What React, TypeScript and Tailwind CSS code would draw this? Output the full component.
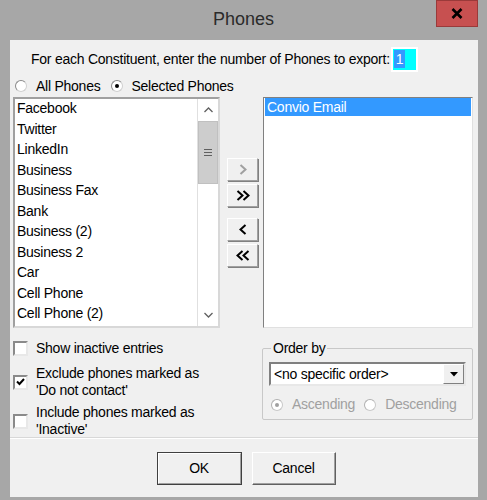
import React from 'react';

const font = "font-['Liberation_Sans',Arial,sans-serif]";

const phones = [
  'Facebook',
  'Twitter',
  'LinkedIn',
  'Business',
  'Business Fax',
  'Bank',
  'Business (2)',
  'Business 2',
  'Car',
  'Cell Phone',
  'Cell Phone (2)',
];

const Radio = ({ checked, disabled }: { checked?: boolean; disabled?: boolean }) => (
  <span
    className={`relative inline-block w-[12px] h-[12px] rounded-full border ${
      disabled ? 'border-[#c8c8c8] border-t-[#b0b0b0] border-l-[#b0b0b0]' : 'border-[#d0d0d0] border-t-[#8a8a8a] border-l-[#8a8a8a]'
    } bg-white`}
  >
    {checked && (
      <span
        className={`absolute left-[3px] top-[3px] w-[4px] h-[4px] rounded-full ${disabled ? 'bg-[#a0a0a0]' : 'bg-black'}`}
      />
    )}
  </span>
);

const Checkbox = ({ checked }: { checked?: boolean }) => (
  <span className="flex items-center justify-center w-[15px] h-[15px] bg-white border-2 border-t-[#8a8a8a] border-l-[#8a8a8a] border-r-[#e8e8e8] border-b-[#e8e8e8] shrink-0">
    {checked && (
      <svg width="9" height="8" viewBox="0 0 9 8">
        <path d="M1 3.5 L3.5 6 L8 1" stroke="black" strokeWidth="2" fill="none" />
      </svg>
    )}
  </span>
);

// chevron drawings for the move buttons
const Chevrons = ({ dir, count, color }: { dir: 'right' | 'left'; count: number; color: string }) => {
  const one = dir === 'right' ? 'M1 1 L6 5.5 L1 10' : 'M6 1 L1 5.5 L6 10';
  return (
    <svg width={count === 1 ? 8 : 14} height="11" viewBox={`0 0 ${count === 1 ? 8 : 14} 11`}>
      <path d={one} stroke={color} strokeWidth="2" fill="none" transform="translate(0.5 0)" />
      {count === 2 && (
        <path d={one} stroke={color} strokeWidth="2" fill="none" transform="translate(6.5 0)" />
      )}
    </svg>
  );
};

const ArrowBtn = ({ dir, count, disabled }: { dir: 'right' | 'left'; count: number; disabled?: boolean }) => (
  <button className="w-[31px] h-[23px] flex items-center justify-center bg-[#f0f0f0] border border-t-white border-l-white border-r-[#a0a0a0] border-b-[#a0a0a0] shadow-[1px_1px_0_#808080]">
    <Chevrons dir={dir} count={count} color={disabled ? '#a0a0a0' : '#000'} />
  </button>
);

const App = () => {
  return (
    <div className={`${font} w-[487px] h-[500px] bg-[#a7a7a7] flex flex-col text-[14px] tracking-[-0.25px] text-black`}>
      {/* title bar */}
      <div className="relative h-[40px] flex items-center justify-center shrink-0">
        <span className="text-[18px] tracking-normal text-[#2b2b2b] -mt-[1px]">Phones</span>
        <div className="absolute left-[436px] top-0 w-[42px] h-[27px] bg-[#c75050] border border-[#9a3a3a] flex items-center justify-center">
          <svg width="12" height="11" viewBox="0 0 12 11">
            <path d="M1.5 1 L10.5 10 M10.5 1 L1.5 10" stroke="black" strokeWidth="2.6" />
          </svg>
        </div>
      </div>

      {/* client */}
      <div className="ml-[10px] w-[468px] h-[457px] bg-[#f0f0f0] flex flex-col">
        <div className="flex items-center h-[34px] pt-[4px]">
          <span className="ml-[21px] whitespace-nowrap">For each Constituent, enter the number of Phones to export:</span>
          <div className="ml-[1px] w-[27px] h-[25px] border-2 border-white bg-[#00ffff] flex items-center pl-[1px]">
            <span className="bg-[#3399ff] text-white px-[2px] leading-[18px]">1</span>
          </div>
        </div>

        <div className="flex items-center h-[24px] ml-[5px]">
          <Radio />
          <span className="ml-[9px]">All Phones</span>
          <span className="ml-[11px] flex items-center">
            <Radio checked />
          </span>
          <span className="ml-[8px]">Selected Phones</span>
        </div>

        <div className="flex mt-[-1px] ml-[3px]">
          {/* left list */}
          <div className="w-[207px] h-[231px] bg-white border-2 border-t-[#a0a0a0] border-l-[#a0a0a0] border-r-[#d8d8d8] border-b-[#d8d8d8] flex">
            <div className="flex-1 pl-[2px] -mt-[1px] leading-[20.5px]">
              {phones.map((p) => (
                <div key={p} className="whitespace-nowrap">
                  {p}
                </div>
              ))}
            </div>
            <div className="w-[21px] bg-[#f0f0f0] border-l border-[#e0e0e0] flex flex-col">
              <div className="h-[22px] bg-white flex items-center justify-center">
                <svg width="9" height="6" viewBox="0 0 9 6">
                  <path d="M0.5 5 L4.5 1 L8.5 5" stroke="#606060" strokeWidth="1.3" fill="none" />
                </svg>
              </div>
              <div className="h-[63px] bg-[#cdcdcd] border border-[#c0c0c0] flex flex-col items-center justify-center gap-[2px]">
                <span className="w-[8px] h-[1px] bg-[#606060]" />
                <span className="w-[8px] h-[1px] bg-[#606060]" />
                <span className="w-[8px] h-[1px] bg-[#606060]" />
              </div>
              <div className="flex-1 bg-white" />
              <div className="h-[22px] bg-white flex items-center justify-center">
                <svg width="9" height="6" viewBox="0 0 9 6">
                  <path d="M0.5 1 L4.5 5 L8.5 1" stroke="#606060" strokeWidth="1.3" fill="none" />
                </svg>
              </div>
            </div>
          </div>

          {/* move buttons */}
          <div className="w-[43px] flex flex-col pl-[7px] pt-[61px]">
            <div className="flex flex-col gap-[3px]">
              <ArrowBtn dir="right" count={1} disabled />
              <ArrowBtn dir="right" count={2} />
            </div>
            <div className="flex flex-col gap-[3px] mt-[11px]">
              <ArrowBtn dir="left" count={1} />
              <ArrowBtn dir="left" count={2} />
            </div>
          </div>

          {/* right list */}
          <div className="w-[210px] h-[231px] bg-white border border-t-[#808080] border-l-[#808080] border-r-[#e0e0e0] border-b-[#e0e0e0] pl-[1px] pr-[1px]">
            <div className="bg-[#3399ff] text-white pl-[2px] leading-[18px]">Convio Email</div>
          </div>
        </div>

        {/* options */}
        <div className="flex mt-[12px]">
          <div className="ml-[3px] w-[240px] flex flex-col leading-[17px]">
            <label className="flex items-center h-[17px]">
              <Checkbox />
              <span className="ml-[8px]">Show inactive entries</span>
            </label>
            <label className="flex items-center mt-[8px]">
              <Checkbox checked />
              <span className="ml-[8px]">
                Exclude phones marked as
                <br />
                'Do not contact'
              </span>
            </label>
            <label className="flex items-center mt-[5px]">
              <Checkbox />
              <span className="ml-[8px]">
                Include phones marked as
                <br />
                'Inactive'
              </span>
            </label>
          </div>

          <div className="ml-[9px] mt-[8px] w-[211px] h-[72px] border border-[#c8c8c8] rounded-[2px] relative px-[6px] pt-[13px]">
            <span className="absolute left-[8px] top-[-9px] bg-[#f0f0f0] px-[2px] leading-[17px]">Order by</span>
            <div className="h-[24px] bg-white border-2 border-t-[#808080] border-l-[#808080] border-r-[#e8e8e8] border-b-[#e8e8e8] flex items-center">
              <span className="flex-1 pl-[3px] whitespace-nowrap">&lt;no specific order&gt;</span>
              <span className="w-[21px] h-[20px] bg-[#f0f0f0] border border-t-white border-l-white border-r-[#808080] border-b-[#808080] flex items-center justify-center">
                <svg width="8" height="5" viewBox="0 0 8 5">
                  <path d="M0 0 L8 0 L4 4.5 Z" fill="black" />
                </svg>
              </span>
            </div>
            <div className="flex items-center mt-[8px] text-[#a0a0a0] ml-[2px]">
              <Radio checked disabled />
              <span className="ml-[9px]">Ascending</span>
              <span className="ml-[9px] flex items-center">
                <Radio disabled />
              </span>
              <span className="ml-[9px]">Descending</span>
            </div>
          </div>
        </div>

        <div className="mt-[-1px] h-[2px] bg-[#d8d8d8] border-b border-white" />

        <div className="flex justify-center gap-[10px] mt-[13px] pl-[4px]">
          <button className="w-[85px] h-[33px] bg-[#f0f0f0] border border-[#404040] flex items-center justify-center">
            <span className="w-full h-full flex items-center justify-center border border-t-white border-l-white border-r-[#a0a0a0] border-b-[#a0a0a0]">
              OK
            </span>
          </button>
          <button className="w-[84px] h-[33px] bg-[#f0f0f0] border border-t-white border-l-white border-r-[#606060] border-b-[#606060] shadow-[inset_-1px_-1px_0_#a0a0a0] flex items-center justify-center">
            Cancel
          </button>
        </div>
      </div>
    </div>
  );
};

export default App;
